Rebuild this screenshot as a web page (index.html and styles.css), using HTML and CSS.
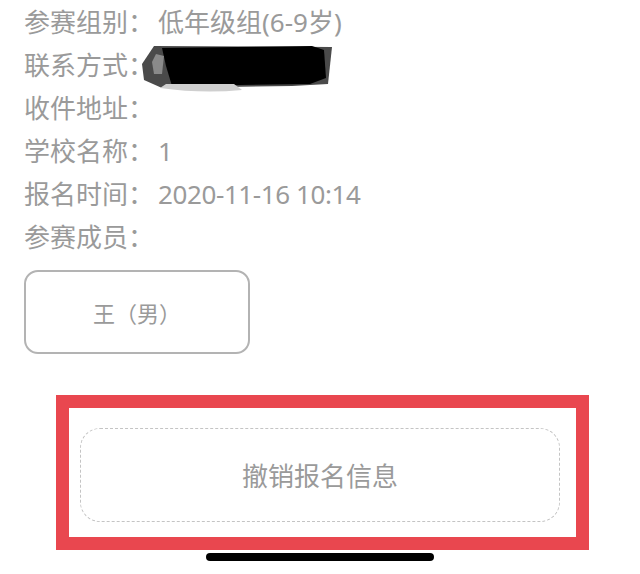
FILE: index.html
```html
<!DOCTYPE html>
<html lang="zh-CN">
<head>
    <meta charset="UTF-8">
    <meta name="viewport" content="width=device-width, initial-scale=1.0">
    <title>报名信息</title>
    <link rel="stylesheet" href="styles.css">
</head>
<body>
    <div class="page">
        <ul class="info">
            <li><span class="label">参赛组别：</span><span class="value">低年级组(6-9岁)</span></li>
            <li class="masked"><span class="label">联系方式：</span>
                <svg class="redact" width="190" height="52" viewBox="0 0 190 52">
                    <polygon points="12,2 190,3 186,40 150,42 20,44 2,36 0,20" fill="#4a4a4a"/>
                    <polygon points="20,4 170,2 182,6 184,34 168,40 30,42 24,22" fill="#000"/>
                    <path d="M18 44 Q60 50 100 46 L92 40 L24 40 Z" fill="#cfcfcf"/>
                    <polygon points="10,18 14,10 22,12 20,30 12,30" fill="#8a8a8a"/>
                </svg>
            </li>
            <li><span class="label">收件地址：</span></li>
            <li><span class="label">学校名称：</span><span class="value">1</span></li>
            <li><span class="label">报名时间：</span><span class="value num">2020-11-16 10:14</span></li>
            <li><span class="label">参赛成员：</span></li>
        </ul>

        <div class="members">
            <div class="member">王（男）</div>
        </div>

        <div class="actions">
            <div class="cancel-btn">撤销报名信息</div>
        </div>
    </div>

    <!-- annotation + home indicator drawn over the page -->
    <div class="mark"></div>
    <div class="home-bar"></div>
</body>
</html>
```

FILE: styles.css
```css
body {
    margin: 0;
    background: #fff;
    font-family: "Noto Sans", "Noto Sans CJK SC", sans-serif;
    color: #9a9a9a;
    position: relative;
    height: 574px;
    overflow: hidden;
}

.page {
    padding: 1px 0 0 24px;
}

.info {
    list-style: none;
    margin: 0;
    padding: 0;
}

.info li {
    font-size: 26px;
    line-height: 43px;
    height: 43px;
    white-space: nowrap;
}

.info .label {
    margin-right: 4px;
}

.info .num {
    letter-spacing: -0.4px;
}

.masked {
    position: relative;
}

.redact {
    position: absolute;
    left: 118px;
    top: 0;
}

.members {
    display: flex;
    margin-top: 11px;
}

.member {
    width: 222px;
    height: 80px;
    border: 2px solid #b3b3b3;
    border-radius: 14px;
    display: flex;
    justify-content: center;
    align-items: center;
    font-size: 22px;
    color: #9a9a9a;
}

.actions {
    padding: 74px 80px 0 56px;
}

.cancel-btn {
    height: 92px;
    border: 1px dashed #c4c4c4;
    border-radius: 20px;
    display: flex;
    justify-content: center;
    align-items: center;
    font-size: 26px;
    color: #9a9a9a;
}

.mark {
    position: absolute;
    left: 56px;
    top: 395px;
    width: 507px;
    height: 129px;
    border: 13px solid #e9474f;
}

.home-bar {
    position: absolute;
    left: 206px;
    top: 553px;
    width: 228px;
    height: 8px;
    border-radius: 4px;
    background: #000;
}
```
